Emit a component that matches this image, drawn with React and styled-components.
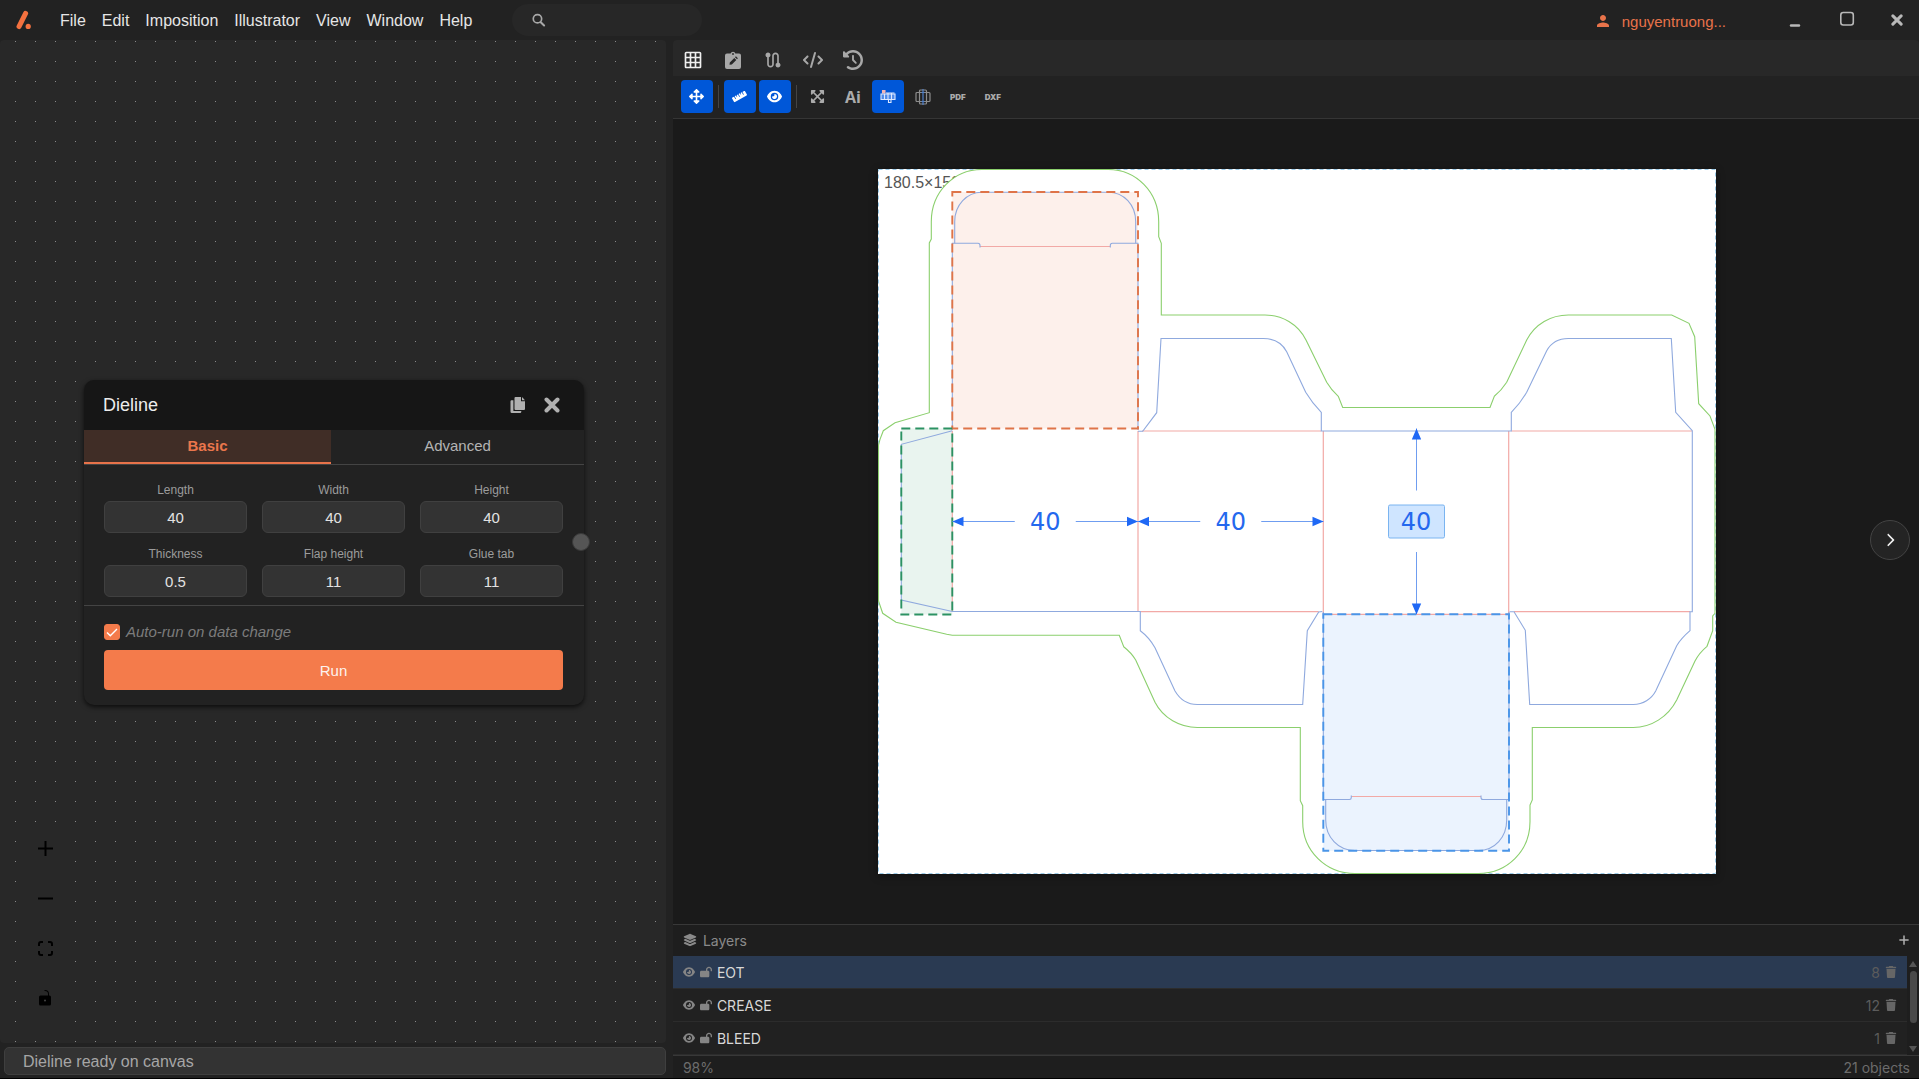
import React, { useState } from "react";
import styled, { createGlobalStyle } from "styled-components";
import { FaArrowsAlt, FaExpandArrowsAlt, FaRuler } from "react-icons/fa";
import {
  FaChevronRight,
  FaClockRotateLeft,
  FaCode,
  FaEye,
  FaLayerGroup,
  FaLockOpen,
  FaPlus,
  FaTrash,
} from "react-icons/fa6";
import { MdGridOn, MdPerson, MdRoute } from "react-icons/md";

const GlobalStyle = createGlobalStyle`
  * {
    box-sizing: border-box;
  }

  body {
    margin: 0;
    background: #000;
    font-family: "Liberation Sans", Arial, sans-serif;
  }

  button,
  input {
    font-family: inherit;
    margin: 0;
  }

  button {
    padding: 0;
    border: 0;
    background: none;
    color: inherit;
    cursor: pointer;
  }

  svg {
    display: block;
  }
`;

const Container = styled.div`
  position: relative;
  display: flex;
  flex-direction: column;
  height: 100vh;
  min-height: 760px;
  background-color: #222222;
  border-bottom: 1px solid #000;
  overflow: hidden;
`;

/* ---------- title bar ---------- */

const TitleBar = styled.header`
  display: flex;
  align-items: center;
  height: 40px;
  flex-shrink: 0;
  padding: 0 16px;
`;

const Menu = styled.nav`
  display: flex;
  gap: 16px;
  margin-left: 28px;
  padding-top: 2px;
`;

const MenuItem = styled.button`
  font-size: 16px;
  line-height: 20px;
  color: #e6e6e6;
`;

const Search = styled.label`
  display: flex;
  align-items: center;
  gap: 10px;
  width: 190px;
  height: 32px;
  margin: 0 auto 0 40px;
  padding: 0 20px;
  border-radius: 16px;
  background-color: #272727;
  color: #a8a8a8;
`;

const SearchInput = styled.input`
  width: 100%;
  min-width: 0;
  border: 0;
  outline: none;
  background: transparent;
  color: #e6e6e6;
  font-size: 14px;
`;

const User = styled.a`
  display: flex;
  align-items: center;
  gap: 10px;
  margin-right: 61px;
  padding-top: 2px;
  color: #e8734a;
  font-size: 15px;
  text-decoration: none;
`;

const WindowButtons = styled.div`
  display: flex;
  align-items: center;
  gap: 36px;
  color: #b8b8b8;
`;

/* ---------- body ---------- */

const Body = styled.div`
  display: grid;
  grid-template-columns: minmax(0, 54fr) minmax(0, 100fr);
  flex: 1;
  min-height: 0;
`;

const LeftColumn = styled.section`
  display: flex;
  flex-direction: column;
  gap: 4px;
  min-height: 0;
  padding: 0 7px 3px 0;
`;

const FlowCanvas = styled.div`
  position: relative;
  flex: 1;
  min-height: 0;
  background-color: #282828;
  border-radius: 4px;
  overflow: hidden;
`;

const Dots = styled.svg`
  width: 100%;
  height: 100%;
`;

const StatusBar = styled.footer`
  height: 28px;
  margin-left: 4px;
  padding: 0 18px;
  border: 1px solid #3f3f3f;
  border-radius: 5px;
  background-color: #333333;
  color: #a6a6a6;
  font-size: 16px;
  line-height: 28px;
`;

const FlowControls = styled.div`
  position: absolute;
  left: 20px;
  bottom: 20px;
  display: flex;
  flex-direction: column;
  background-color: #282828;
`;

const FlowControl = styled.button`
  display: grid;
  place-items: center;
  width: 50px;
  height: 50px;
  color: #000;
`;

/* ---------- dieline node ---------- */

const Node = styled.form`
  position: absolute;
  left: 84px;
  top: 340px;
  width: 500px;
  border-radius: 10px;
  background-color: #222222;
  box-shadow: 0 2px 5px rgba(0, 0, 0, 0.7);
`;

const NodeHeader = styled.div`
  display: flex;
  align-items: center;
  gap: 18px;
  height: 50px;
  padding: 0 24px 0 19px;
  border-radius: 10px 10px 0 0;
  background-color: #161616;
  color: #b0b0b0;
`;

const NodeTitle = styled.h2`
  flex: 1;
  margin: 0;
  color: #ececec;
  font-size: 18px;
  font-weight: 400;
`;

const Tabs = styled.div`
  display: grid;
  grid-template-columns: 247fr 253fr;
  border-bottom: 1px solid #444444;
`;

const Tab = styled.button`
  height: 34px;
  padding-bottom: 2px;
  border-bottom: 2px solid ${(p) => (p.$active ? "#e8734a" : "transparent")};
  background-color: ${(p) => (p.$active ? "#402d26" : "transparent")};
  color: ${(p) => (p.$active ? "#ea764c" : "#b4b4b4")};
  font-size: 15px;
  font-weight: ${(p) => (p.$active ? "bold" : "normal")};
`;

const Fields = styled.div`
  display: grid;
  grid-template-columns: repeat(3, 1fr);
  gap: 12px 15px;
  padding: 16px 21px 8px 20px;
  border-bottom: 1px solid #444444;
`;

const Field = styled.label`
  display: flex;
  flex-direction: column;
  gap: 2px;
  color: #9c9c9c;
  font-size: 12px;
  line-height: 18px;
  text-align: center;
`;

const FieldInput = styled.input`
  width: 100%;
  height: 32px;
  border: 1px solid #404040;
  border-radius: 6px;
  background-color: #333333;
  color: #e2e2e2;
  font-size: 15px;
  text-align: center;
`;

const NodeFooter = styled.div`
  display: flex;
  flex-direction: column;
  gap: 9px;
  padding: 17px 21px 15px 20px;
`;

const AutoRun = styled.label`
  display: flex;
  align-items: center;
  gap: 6px;
  color: #7c7c7c;
  font-size: 15px;
  font-style: italic;
  line-height: 18px;
`;

const CheckWrap = styled.span`
  display: grid;

  > * {
    grid-area: 1 / 1;
    width: 16px;
    height: 16px;
  }

  > svg {
    pointer-events: none;
  }
`;

const CheckInput = styled.input`
  appearance: none;
  border-radius: 3px;
  border: 1px solid #f47b4b;
  background-color: #222222;

  &:checked {
    background-color: #f47b4b;
  }
`;

const RunButton = styled.button`
  height: 40px;
  border-radius: 4px;
  background-color: #f47b4b;
  color: #fdf3ee;
  font-size: 15px;
`;

const Handle = styled.span`
  position: absolute;
  right: -6px;
  top: 153px;
  width: 18px;
  height: 18px;
  border: 1px solid #3a3a3a;
  border-radius: 50%;
  background-color: #555555;
`;

/* ---------- right side ---------- */

const RightColumn = styled.section`
  display: flex;
  flex-direction: column;
  min-width: 0;
  min-height: 0;
`;

const ViewBar = styled.div`
  display: flex;
  align-items: center;
  gap: 20px;
  height: 36px;
  padding: 3px 0 0 10px;
  border-radius: 4px 4px 0 0;
  background-color: #282828;
`;

const ViewButton = styled.button`
  display: grid;
  place-items: center;
  width: 20px;
  height: 20px;
  color: ${(p) => (p.$active ? "#f0f0f0" : "#a8a8a8")};
`;

const ToolBar = styled.div`
  display: flex;
  align-items: center;
  gap: 3px;
  height: 43px;
  padding: 0 0 1px 8px;
  border-bottom: 1px solid #353535;
`;

const Tool = styled.button`
  display: grid;
  place-items: center;
  width: 32px;
  height: 33px;
  border-radius: 4px;
  background-color: ${(p) => (p.$active ? "#0057d8" : "transparent")};
  color: ${(p) => (p.$active ? "#ffffff" : "#ababab")};
`;

const AiLabel = styled.span`
  font-family: "Open Sans", "Noto Sans", sans-serif;
  font-size: 16px;
  font-weight: 700;
`;

const FormatLabel = styled.span`
  font-family: Inter, sans-serif;
  font-size: 8px;
  font-weight: 900;
`;

const Divider = styled.span`
  width: 1px;
  height: 23px;
  margin: 0 2px;
  background-color: #444444;
`;

const Stage = styled.main`
  display: flex;
  align-items: center;
  justify-content: center;
  flex: 1;
  min-height: 0;
  background-color: #1a1a1a;
  overflow: hidden;
`;

const Artboard = styled.svg`
  width: 838px;
  max-width: 100%;
  height: auto;
  margin-left: 2px;
  box-shadow: 0 2px 8px rgba(0, 0, 0, 0.4);
`;

const NextButton = styled.button`
  position: absolute;
  right: 9px;
  top: 50%;
  display: grid;
  place-items: center;
  width: 40px;
  height: 40px;
  margin-top: -19px;
  border: 1px solid #444444;
  border-radius: 50%;
  background-color: #242424;
  color: #f0f0f0;
`;

/* ---------- layers ---------- */

const Layers = styled.section`
  border-top: 1px solid #383838;
  background-color: #1e1e1e;
  font-family: Inter, sans-serif;
  font-size: 14px;
`;

const LayersHeader = styled.div`
  display: flex;
  align-items: center;
  gap: 6px;
  height: 31px;
  padding: 0 9px 1px 10px;
  color: #8a8a8a;
`;

const LayersTitle = styled.span`
  flex: 1;
`;

const LayersBody = styled.div`
  display: flex;
`;

const LayerList = styled.div`
  flex: 1;
`;

const LayerRow = styled.div`
  display: flex;
  align-items: center;
  gap: 5px;
  height: 33px;
  padding: 0 10px;
  border-bottom: 1px solid #2c2c2c;
  background-color: ${(p) => (p.$active ? "#2a3a52" : "#212121")};
  color: #858585;
`;

const LayerName = styled.span`
  flex: 1;
  color: #d8d8d8;
`;

const LayerCount = styled.span`
  color: #5c5c5c;
`;

const ScrollTrack = styled.div`
  display: flex;
  flex-direction: column;
  align-items: center;
  gap: 4px;
  width: 12px;
  padding: 5px 0 3px;
  color: #555555;
`;

const ScrollThumb = styled.span`
  width: 7px;
  height: 52px;
  margin-bottom: auto;
  border-radius: 4px;
  background-color: #4a4a4a;
`;

const LayersFooter = styled.div`
  display: flex;
  justify-content: space-between;
  height: 23px;
  padding: 0 9px 0 10px;
  border-top: 1px solid #383838;
  color: #6c6c6c;
  line-height: 23px;
`;

/* ---------- icons ---------- */

const LogoIcon = () => (
  <svg width="16" height="20" viewBox="0 0 16 20">
    <path d="M9.6 3.4 3 16.6" stroke="#f4713f" strokeWidth="5" strokeLinecap="round" />
    <circle cx="12.2" cy="16.4" r="2.6" fill="#f4713f" />
  </svg>
);

const SearchIcon = () => (
  <svg width="16" height="16" viewBox="0 0 16 16" fill="none" stroke="currentColor" strokeLinecap="round">
    <circle cx="6.5" cy="6.5" r="5" strokeWidth="2" />
    <path d="m10.4 10.6 4 4" strokeWidth="2.4" />
  </svg>
);

const CopyIcon = () => (
  <svg width="16" height="18" viewBox="0 0 16 18" fill="currentColor">
    <path d="M5.5 1H11v4.2h4V13a1 1 0 0 1-1 1H5.5a1 1 0 0 1-1-1V2a1 1 0 0 1 1-1Z" />
    <path d="M12 1l3 3.200h-3Z" />
    <path d="M3.400 4.200v10.900h7.900v.7a1.200 1.200 0 0 1-1.200 1.200H1.800A1.300 1.300 0 0 1 .5 15.700V5.400c0-.7.5-1.200 1.200-1.200Z" />
  </svg>
);

const CloseIcon = ({ size, weight }) => (
  <svg width={size} height={size} viewBox="0 0 16 16">
    <path
      d="M2.500 2.500l11 11m0-11l-11 11"
      stroke="currentColor"
      strokeWidth={weight}
      strokeLinecap="round"
    />
  </svg>
);

const ClipboardIcon = () => (
  <svg width="16" height="18" viewBox="0 0 16 18">
    <path d="M2 2.500h3.600a2.500 2.500 0 0 1 4.800 0H14a2 2 0 0 1 2 2V16a2 2 0 0 1-2 2H2a2 2 0 0 1-2-2V4.500a2 2 0 0 1 2-2Z" fill="currentColor" />
    <circle cx="8" cy="3" r=".9" fill="#282828" />
    <path d="m4.500 13.700.3-2.300 4.500-4.500 2 2-4.500 4.500ZM10 6.200l.9-.9 2 2-.9.9Z" fill="#282828" />
  </svg>
);

const DielineIcon = () => (
  <svg width="16" height="16" viewBox="0 0 16 16" fill="none" stroke="#dce8ff" strokeWidth="1.1">
    <path d="M2.500 4.500V1.500H5v3" fill="#f3b6b6" stroke="#f3b6b6" />
    <path d="M1 5h14v5.500H1Z" fill="#4e8bea" />
    <path d="M4.500 5v5.500M8 4v6.500M11.500 4v6.500M8.500 10.500v3H11v-3M6 4h8.500" />
  </svg>
);

const GlobeBoxIcon = () => (
  <svg width="16" height="18" viewBox="0 0 16 18" fill="none" strokeWidth="1.2">
    <path d="M1 5.500a1 1 0 0 1 1-1h12a1 1 0 0 1 1 1v7a1 1 0 0 1-1 1H2a1 1 0 0 1-1-1Z" stroke="#8d8d8d" />
    <path d="M4.500 3a1 1 0 0 1 1-1h5a1 1 0 0 1 1 1v12a1 1 0 0 1-1 1h-5a1 1 0 0 1-1-1Z" stroke="#8d8d8d" />
    <path d="M8 1v16M6.500 4.500h3M6.500 13.500h3" stroke="#5080c8" />
  </svg>
);

const FitIcon = () => (
  <svg width="15" height="15" viewBox="0 0 15 15" fill="none" stroke="currentColor" strokeWidth="2">
    <path d="M1 5V3a2 2 0 0 1 2-2h2M10 1h2a2 2 0 0 1 2 2v2M14 10v2a2 2 0 0 1-2 2h-2M5 14H3a2 2 0 0 1-2-2v-2" />
  </svg>
);

const UnlockIcon = () => (
  <svg width="12" height="16" viewBox="0 0 12 16">
    <path
      d="M1.500 5.500H9V4a3 3 0 0 0-3-3h-.5V0H6a4 4 0 0 1 4 4v1.500h.5A1.500 1.500 0 0 1 12 7v7a1.500 1.500 0 0 1-1.500 1.500h-9A1.500 1.500 0 0 1 0 14V7a1.500 1.500 0 0 1 1.500-1.500Z"
      fill="currentColor"
    />
    <circle cx="6" cy="10.5" r="1" fill="#444" />
  </svg>
);

/* ---------- dieline drawing ---------- */

const bleedPath =
  "M878.5 601V445L880 439.3L883.3 430.7L895 422.7L929.3 412.7V243L931.3 239V221.7" +
  "C931.3 192 954 169.5 981.7 169.5H1108.3C1136 169.5 1158.7 192 1158.7 221.7" +
  "V236.7L1161.3 243.3V315H1265C1282 315 1298 324 1306 340L1326.7 382.3" +
  "C1330 388 1334 392.5 1338.3 396.3L1342.7 407.5H1490L1494.3 396.3" +
  "C1499 392.5 1503 388 1506.7 382.3L1526.7 340C1535 324 1551 315 1568.3 315" +
  "H1671.7L1689 323.3L1694.7 336.7L1698.7 403.7L1710 416L1715 429.3V613.3" +
  "L1712.7 616V630.7L1707 646.3C1702 650.5 1698 655 1695 661L1676.7 700" +
  "C1668 717 1651 727.5 1633.3 727.5H1532.3V800L1530 805V821.7" +
  "C1530 851 1507 873.5 1478.3 873.5H1355C1326 873.5 1302.7 851 1302.7 821.7" +
  "V805.7L1300.3 800.7V727.5H1197.3C1180 727.5 1163 718 1155 702.3L1135.7 660" +
  "C1132.5 654.5 1128.5 650.5 1123.7 646.7L1119.3 635.3H952.3L946.7 634.3" +
  "L896 622.3L882.7 613.3Z";

const cutPaths = [
  // top tuck flap
  "M954.7 243.3V221.7C954.7 205 967 192.3 981.7 192.3H1108.3C1124 192.3 1135.7 205 1135.7 221.7V243.3",
  "M952.3 430V243.3H978C979.3 243.3 980 244.3 980 245.5V247.5M1110.3 247.5V245.5C1110.3 244.3 1111 243.3 1112.3 243.3H1138V430",
  // glue tab
  "M952.3 430.7L901.3 444.3V600L952.3 611.5H1140.3V630.7C1146 635 1151 640.5 1155 647.7L1175 691C1180 699.5 1188 704.5 1197.3 704.5H1302.7L1307.3 630.7L1318.7 612L1322.3 611.5",
  // upper dust flaps
  "M1138 431.3H1142.7L1156.7 412.7L1161 338.5H1263.3C1273.5 338.5 1282 343 1286.7 351.7L1305.7 392.3C1310 399.5 1315 406 1321.3 412.3V431H1511.3V412.3C1517.5 406 1522.5 399.5 1526.7 392.3L1546.7 350.7C1551 343 1559 338.5 1568.3 338.5H1671.3L1675.7 412.3L1692.3 430.7V611.7H1690V630.7C1685 635 1680.5 639.5 1676.7 645.7L1655.7 691C1651.5 699 1643 704.5 1633.3 704.5H1529.7L1525.3 630.3L1514 611.7H1509.5",
  // bottom tuck flap
  "M1323.3 612V799.5H1349.5C1350.7 799.5 1351.3 798.5 1351.3 797.5V795.5M1481 795.5V797.5C1481 798.5 1482 799.5 1483 799.5H1509V612",
  "M1325.7 799.5V820C1325.7 837 1338 850.5 1355 850.5H1478.3C1495 850.5 1506.7 837 1506.7 820V799.5",
];

const creasePath =
  "M980 246.5H1110.3M952.3 431V611.5M1138 431V611.5M1323.3 431V614M1508.7 431V614" +
  "M1142 431H1321.3M1511.3 431H1692M1140.3 611.7H1318.7M1514 611.7H1690M1323.3 614.3H1509M1351.3 796.5H1481";

const zones = [
  { id: "tuck", x: 952.3, y: 192, w: 185.7, h: 236.5, fill: "#fdf0eb", stroke: "#df7449" },
  { id: "glue", x: 901.3, y: 428.5, w: 51, h: 186, fill: "#e9f4ef", stroke: "#2c9263" },
  { id: "base", x: 1323.3, y: 614.3, w: 185.7, h: 236.5, fill: "#ebf3fe", stroke: "#4a95e8" },
];

const HorizontalDimension = ({ from, to }) => {
  const mid = (from + to) / 2;
  return (
    <g>
      <path d={`M${from} 521.5H${mid - 30.5}M${mid + 30.5} 521.5H${to}`} stroke="#6f9df0" />
      <path
        d={`M${from} 521.5l11-4.700v9.400ZM${to} 521.5l-11-4.700v9.400Z`}
        fill="#1f68f5"
      />
      <DimensionText x={mid} y="530">40</DimensionText>
    </g>
  );
};

const DimensionText = styled.text`
  fill: #2468ee;
  font-family: "DejaVu Sans", sans-serif;
  font-size: 24px;
  text-anchor: middle;
`;

const SizeText = styled.text`
  fill: #555555;
  font-family: "Liberation Sans", Arial, sans-serif;
  font-size: 16px;
`;

const DielineDrawing = () => (
  <Artboard viewBox="878 169 838 705" role="img" aria-label="Dieline">
    <rect x="878" y="169" width="838" height="705" fill="#fff" />
    <SizeText x="884" y="188">180.5×152</SizeText>
    <rect
      x="878.5"
      y="169.5"
      width="837"
      height="704"
      fill="none"
      stroke="#9ccbe8"
      strokeDasharray="4 3"
    />
    <path d={bleedPath} fill="#fff" stroke="#8bcf6d" strokeWidth="1.1" />
    {zones.map((z) => (
      <rect key={z.id} x={z.x} y={z.y} width={z.w} height={z.h} fill={z.fill} />
    ))}
    <path d={creasePath} fill="none" stroke="#f2a9a6" strokeWidth="1.2" />
    {cutPaths.map((d) => (
      <path key={d} d={d} fill="none" stroke="#8fa9de" strokeWidth="1.1" />
    ))}
    {zones.map((z) => (
      <rect
        key={z.id}
        x={z.x}
        y={z.y}
        width={z.w}
        height={z.h}
        fill="none"
        stroke={z.stroke}
        strokeWidth="1.9"
        strokeDasharray="9 5"
      />
    ))}
    <HorizontalDimension from={952.5} to={1138} />
    <HorizontalDimension from={1138} to={1323.5} />
    <path d="M1416.5 428.5V490.5M1416.5 552V614" stroke="#6f9df0" />
    <path d="M1416.5 428.5l4.700 11h-9.400ZM1416.5 614.5l4.700-11h-9.400Z" fill="#1f68f5" />
    <rect x="1388.5" y="505" width="56" height="33" rx="1.5" fill="#cfe5ff" stroke="#7ab4f0" />
    <DimensionText x="1416" y="530">40</DimensionText>
  </Artboard>
);

const menus = ["File", "Edit", "Imposition", "Illustrator", "View", "Window", "Help"];

const layers = [
  { name: "EOT", count: 8 },
  { name: "CREASE", count: 12 },
  { name: "BLEED", count: 1 },
];

const fields = [
  { label: "Length", value: "40" },
  { label: "Width", value: "40" },
  { label: "Height", value: "40" },
  { label: "Thickness", value: "0.5" },
  { label: "Flap height", value: "11" },
  { label: "Glue tab", value: "11" },
];

const DielineNode = () => {
  const [tab, setTab] = useState("Basic");
  return (
    <Node onSubmit={(e) => e.preventDefault()}>
      <NodeHeader>
        <NodeTitle>Dieline</NodeTitle>
        <button type="button" aria-label="Duplicate"><CopyIcon /></button>
        <button type="button" aria-label="Remove"><CloseIcon size={16} weight={4} /></button>
      </NodeHeader>
      <Tabs role="tablist">
        {["Basic", "Advanced"].map((name) => (
          <Tab
            key={name}
            type="button"
            role="tab"
            aria-selected={tab === name}
            $active={tab === name}
            onClick={() => setTab(name)}
          >
            {name}
          </Tab>
        ))}
      </Tabs>
      <Fields>
        {fields.map((field) => (
          <Field key={field.label}>
            {field.label}
            <FieldInput defaultValue={field.value} inputMode="decimal" />
          </Field>
        ))}
      </Fields>
      <NodeFooter>
        <AutoRun>
          <CheckWrap>
            <CheckInput type="checkbox" defaultChecked />
            <svg viewBox="0 0 16 16">
              <path d="m3 8.500 3.300 3.300L13 5" fill="none" stroke="#fff" strokeWidth="1.4" />
            </svg>
          </CheckWrap>
          Auto-run on data change
        </AutoRun>
        <RunButton type="submit">Run</RunButton>
      </NodeFooter>
      <Handle />
    </Node>
  );
};

const LayersPanel = () => {
  const [selected, setSelected] = useState("EOT");
  return (
    <Layers>
      <LayersHeader>
        <FaLayerGroup size={14} />
        <LayersTitle>Layers</LayersTitle>
        <button aria-label="Add layer"><FaPlus size={12} color="#b0b0b0" /></button>
      </LayersHeader>
      <LayersBody>
        <LayerList>
          {layers.map((layer) => (
            <LayerRow
              key={layer.name}
              $active={selected === layer.name}
              onClick={() => setSelected(layer.name)}
            >
              <button aria-label="Toggle visibility"><FaEye size={12} /></button>
              <button aria-label="Toggle lock"><FaLockOpen size={12} /></button>
              <LayerName>{layer.name}</LayerName>
              <LayerCount>{layer.count}</LayerCount>
              <button aria-label="Delete layer"><FaTrash size={12} color="#666" /></button>
            </LayerRow>
          ))}
        </LayerList>
        <ScrollTrack aria-hidden="true">
          <svg width="8" height="6"><path d="M0 6 4 0l4 6Z" fill="currentColor" /></svg>
          <ScrollThumb />
          <svg width="8" height="6"><path d="M0 0h8L4 6Z" fill="currentColor" /></svg>
        </ScrollTrack>
      </LayersBody>
      <LayersFooter>
        <span>98%</span>
        <span>21 objects</span>
      </LayersFooter>
    </Layers>
  );
};

const App = () => {
  return (
    <Container>
      <GlobalStyle />
      <TitleBar>
        <LogoIcon />
        <Menu>
          {menus.map((item) => (
            <MenuItem key={item}>{item}</MenuItem>
          ))}
        </Menu>
        <Search>
          <SearchIcon />
          <SearchInput type="text" aria-label="Search" />
        </Search>
        <User href="#account">
          <MdPerson size={18} />
          nguyentruong...
        </User>
        <WindowButtons>
          <button aria-label="Minimize">
            <svg width="16" height="16"><path d="M4 13.500h8" stroke="currentColor" strokeWidth="2.4" strokeLinecap="round" /></svg>
          </button>
          <button aria-label="Maximize">
            <svg width="16" height="18"><rect x="1.8" y="1.5" width="12.5" height="12.5" rx="2.5" fill="none" stroke="currentColor" strokeWidth="1.6" /></svg>
          </button>
          <button aria-label="Close"><CloseIcon size={12} weight={4} /></button>
        </WindowButtons>
      </TitleBar>

      <Body>
        <LeftColumn>
          <FlowCanvas>
            <Dots aria-hidden="true">
              <pattern id="dots" x="5" y="11" width="20" height="20" patternUnits="userSpaceOnUse">
                <rect x="10" y="10" width="1" height="1" fill="#8a8a8a" />
              </pattern>
              <rect width="100%" height="100%" fill="url(#dots)" />
            </Dots>
            <DielineNode />
            <FlowControls>
              <FlowControl aria-label="Zoom in">
                <svg width="15" height="15"><path d="M0 7.500h15M7.500 0v15" stroke="currentColor" strokeWidth="2" /></svg>
              </FlowControl>
              <FlowControl aria-label="Zoom out">
                <svg width="15" height="15"><path d="M0 7.500h15" stroke="currentColor" strokeWidth="2" /></svg>
              </FlowControl>
              <FlowControl aria-label="Fit view"><FitIcon /></FlowControl>
              <FlowControl aria-label="Toggle interactivity"><UnlockIcon /></FlowControl>
            </FlowControls>
          </FlowCanvas>
          <StatusBar>Dieline ready on canvas</StatusBar>
        </LeftColumn>

        <RightColumn>
          <ViewBar>
            <ViewButton aria-label="Grid" $active><MdGridOn size={20} /></ViewButton>
            <ViewButton aria-label="Notes"><ClipboardIcon /></ViewButton>
            <ViewButton aria-label="Path"><MdRoute size={20} /></ViewButton>
            <ViewButton aria-label="Code"><FaCode size={20} /></ViewButton>
            <ViewButton aria-label="History"><FaClockRotateLeft size={20} /></ViewButton>
          </ViewBar>
          <ToolBar>
            <Tool aria-label="Move" $active><FaArrowsAlt size={15} /></Tool>
            <Divider />
            <Tool aria-label="Ruler" $active><FaRuler size={15} /></Tool>
            <Tool aria-label="Preview" $active><FaEye size={15} /></Tool>
            <Divider />
            <Tool aria-label="Fit to screen"><FaExpandArrowsAlt size={15} /></Tool>
            <Tool><AiLabel>Ai</AiLabel></Tool>
            <Tool aria-label="Dieline view" $active><DielineIcon /></Tool>
            <Tool aria-label="Box view"><GlobeBoxIcon /></Tool>
            <Tool><FormatLabel>PDF</FormatLabel></Tool>
            <Tool><FormatLabel>DXF</FormatLabel></Tool>
          </ToolBar>
          <Stage>
            <DielineDrawing />
          </Stage>
          <LayersPanel />
        </RightColumn>
      </Body>
      <NextButton aria-label="Next"><FaChevronRight size={14} /></NextButton>
    </Container>
  );
};

export default App;
